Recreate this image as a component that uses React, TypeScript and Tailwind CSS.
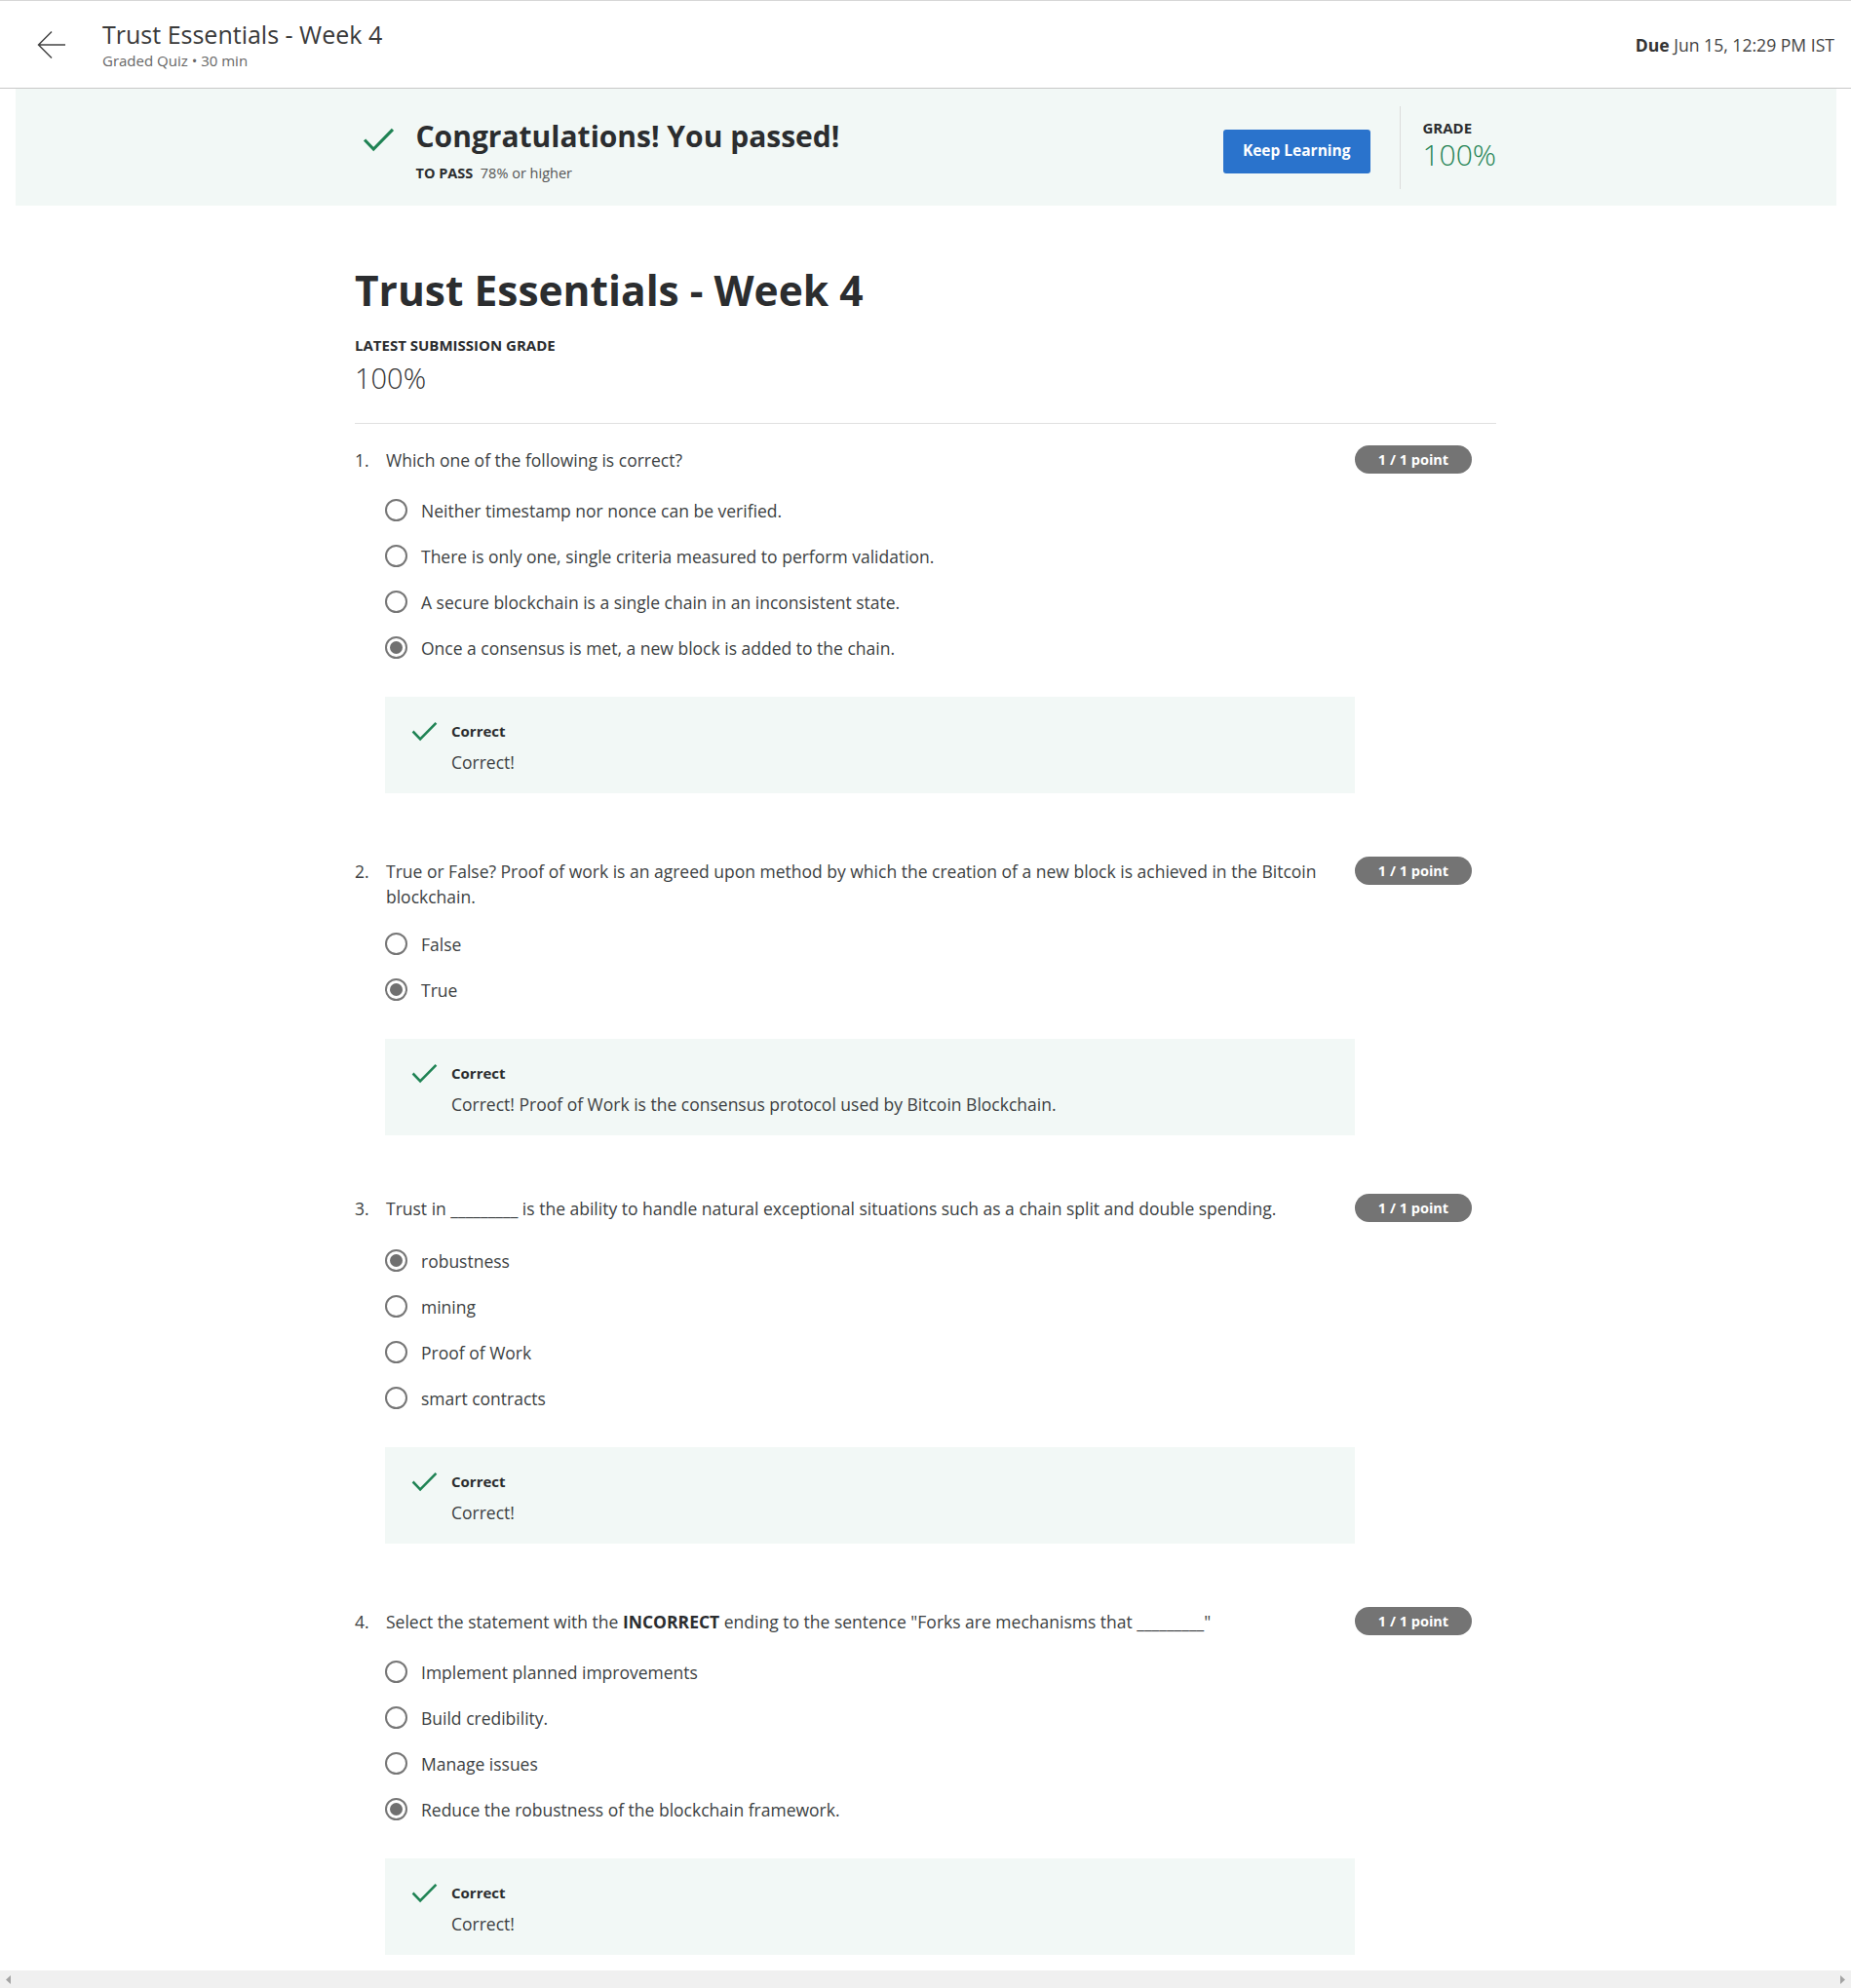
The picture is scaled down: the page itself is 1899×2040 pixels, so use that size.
import React from "react";

type Option = { label: string; selected?: boolean };
type Question = {
  num: number;
  text: React.ReactNode;
  options: Option[];
  feedback: string;
  optGap: string;
  gap: string;
};

const questions: Question[] = [
  {
    num: 1,
    text: "Which one of the following is correct?",
    options: [
      { label: "Neither timestamp nor nonce can be verified." },
      { label: "There is only one, single criteria measured to perform validation." },
      { label: "A secure blockchain is a single chain in an inconsistent state." },
      { label: "Once a consensus is met, a new block is added to the chain.", selected: true },
    ],
    feedback: "Correct!",
    optGap: "mt-[15px]",
    gap: "mb-[67px]",
  },
  {
    num: 2,
    text: "True or False? Proof of work is an agreed upon method by which the creation of a new block is achieved in the Bitcoin blockchain.",
    options: [{ label: "False" }, { label: "True", selected: true }],
    feedback: "Correct! Proof of Work is the consensus protocol used by Bitcoin Blockchain.",
    optGap: "mt-[12px]",
    gap: "mb-[62px]",
  },
  {
    num: 3,
    text: "Trust in _________ is the ability to handle natural exceptional situations such as a chain split and double spending.",
    options: [
      { label: "robustness", selected: true },
      { label: "mining" },
      { label: "Proof of Work" },
      { label: "smart contracts" },
    ],
    feedback: "Correct!",
    optGap: "mt-[17px]",
    gap: "mb-[67px]",
  },
  {
    num: 4,
    text: (
      <>
        Select the statement with the <span className="font-bold text-[#2b2d2f]">INCORRECT</span> ending to the sentence "Forks are mechanisms that _________"
      </>
    ),
    options: [
      { label: "Implement planned improvements" },
      { label: "Build credibility." },
      { label: "Manage issues" },
      { label: "Reduce the robustness of the blockchain framework.", selected: true },
    ],
    feedback: "Correct!",
    optGap: "mt-[15px]",
    gap: "mb-[60px]",
  },
];

function Check({ className }: { className?: string }) {
  return (
    <svg className={className} viewBox="0 0 34 26" fill="none" stroke="#1f8354" strokeWidth={3.2} strokeLinecap="butt" strokeLinejoin="miter">
      <polyline points="2,13 11.5,23 32,2" />
    </svg>
  );
}

function Radio({ selected }: { selected?: boolean }) {
  return (
    <span className="w-[23px] h-[23px] rounded-full border-2 border-[#767676] flex items-center justify-center shrink-0">
      {selected && <span className="w-[13px] h-[13px] rounded-full bg-[#707070]" />}
    </span>
  );
}

function QuestionBlock({ q }: { q: Question }) {
  return (
    <div className={`flex items-start pr-[25px] ${q.gap}`}>
      <div className="w-[32px] shrink-0 text-[17.5px] leading-[26px] text-[#3c3f42]">{q.num}.</div>
      <div className="flex-1 min-w-0">
        <div className="pr-[20px] text-[17.5px] leading-[26px] text-[#3c3f42]">{q.text}</div>
        <div className={q.optGap}>
          {q.options.map((o) => (
            <div key={o.label} className="h-[47px] flex items-center gap-[14px] -ml-[1px]">
              <Radio selected={o.selected} />
              <span className="text-[17.5px] leading-[24px] text-[#3c3f42]">{o.label}</span>
            </div>
          ))}
        </div>
        <div className="mt-[27px] -ml-[1px] h-[99px] bg-[#f2f8f6] pl-[27px] pt-[24px] flex items-start gap-[14px]">
          <Check className="w-[27px] h-[21px] mt-[1px] shrink-0" />
          <div>
            <div className="text-[15px] leading-[22px] font-bold text-[#2b2d2f]">Correct</div>
            <div className="mt-[8px] text-[17.5px] leading-[26px] text-[#3c3f42]">{q.feedback}</div>
          </div>
        </div>
      </div>
      <div className="shrink-0 -mt-[2px] w-[120px] h-[29px] rounded-full bg-[#747474] text-white text-[14.5px] font-bold flex items-center justify-center">
        1 / 1 point
      </div>
    </div>
  );
}

export default function App() {
  return (
    <div className="h-[2040px] flex flex-col bg-white font-['Open_Sans',sans-serif] overflow-hidden">
      {/* Header */}
      <header className="h-[91px] shrink-0 border-t border-b border-t-[#d6d6d6] border-b-[#c8c8c8] flex items-center pl-[38px] pr-[17px]">
        <svg className="w-[30px] h-[30px] shrink-0" viewBox="0 0 30 30" fill="none" stroke="#444" strokeWidth={1.5}>
          <path d="M29 15H1.5M15 1.5L1.5 15L15 28.5" />
        </svg>
        <div className="ml-[37px]">
          <div className="text-[25px] leading-[30px] text-[#3a3a3a]">Trust Essentials - Week 4</div>
          <div className="mt-[2px] text-[15px] leading-[20px] text-[#666]">Graded Quiz • 30 min</div>
        </div>
        <div className="ml-auto mt-[2px] text-[17.6px] text-[#444]">
          <span className="font-bold text-[#333]">Due</span> Jun 15, 12:29 PM IST
        </div>
      </header>

      {/* Passed banner */}
      <div className="shrink-0 ml-[16px] mr-[15px] h-[120px] bg-[#f2f8f6]">
        <div className="w-[1171px] mx-auto h-full flex items-center">
          <Check className="ml-[7px] -mt-[15px] w-[33px] h-[25px] shrink-0" />
          <div className="ml-[22px] mt-[6px]">
            <div className="text-[30px] leading-[38px] font-bold text-[#2b2d2f]">Congratulations! You passed!</div>
            <div className="mt-[9px] text-[14.5px] leading-[20px] text-[#555]">
              <span className="font-bold text-[#2b2d2f]">TO PASS</span>&nbsp;&nbsp;78% or higher</div>
          </div>
          <button className="ml-auto mt-[8px] h-[45px] px-[20px] rounded-[3px] bg-[#2a73cc] text-white text-[15.5px] font-bold">
            Keep Learning
          </button>
          <div className="ml-[30px] w-px h-[85px] bg-[#dcdcdc]" />
          <div className="ml-[23px] w-[76px] -mt-[4px]">
            <div className="text-[15px] leading-[20px] font-bold text-[#2b2d2f]">GRADE</div>
            <div className="text-[30px] leading-[36px] font-light text-[#1f8354]">100%</div>
          </div>
        </div>
      </div>

      {/* Main */}
      <main className="flex-1 min-h-0 overflow-hidden">
        <div className="w-[1171px] mx-auto pt-[61px]">
          <h1 className="text-[42.5px] leading-[52px] font-bold text-[#2b2d2f]">Trust Essentials - Week 4</h1>
          <div className="mt-[20px] text-[15px] leading-[20px] font-bold text-[#2b2d2f]">LATEST SUBMISSION GRADE</div>
          <div className="mt-[6px] text-[29px] leading-[36px] font-light text-[#333]">100%</div>
          <div className="mt-[28px] h-px bg-[#e1e1e1]" />
          <div className="pt-[24px]">
            {questions.map((q) => (
              <QuestionBlock key={q.num} q={q} />
            ))}
          </div>
        </div>
      </main>

      {/* Horizontal scrollbar */}
      <div className="shrink-0 h-[18px] bg-[#f0f0f0] flex items-center justify-between px-[6px]">
        <svg width="5" height="9" viewBox="0 0 5 9"><path d="M5 0L0 4.5L5 9Z" fill="#a3a3a3" /></svg>
        <svg width="5" height="9" viewBox="0 0 5 9"><path d="M0 0L5 4.5L0 9Z" fill="#a3a3a3" /></svg>
      </div>
    </div>
  );
}
